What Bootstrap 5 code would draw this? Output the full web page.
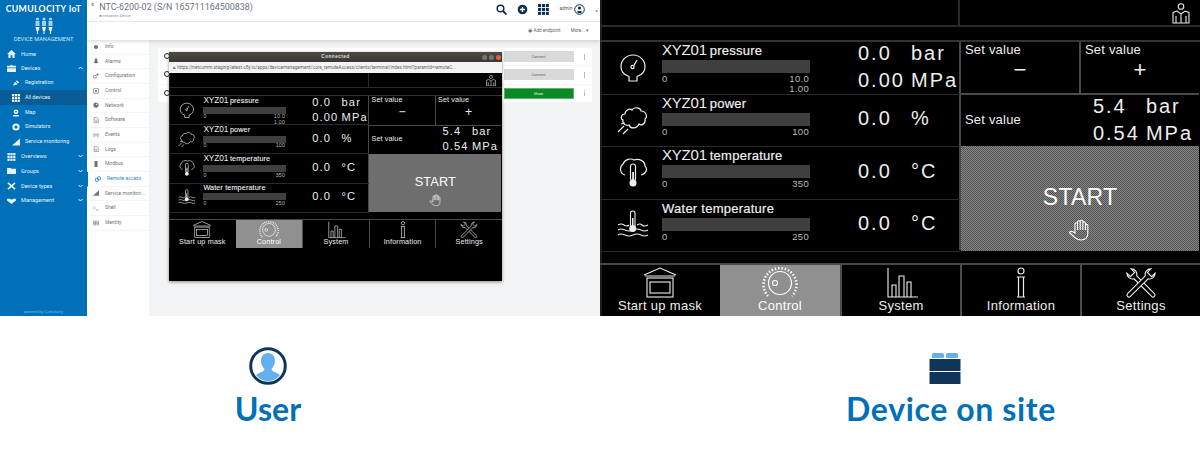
<!doctype html>
<html lang="en"><head><meta charset="utf-8"><title>Remote access</title>
<link href="https://cdn.jsdelivr.net/npm/bootstrap@5.3.0/dist/css/bootstrap.min.css" rel="stylesheet">
<style>
html,body{margin:0;background:#fff;overflow:hidden}
body{width:1200px;height:450px;font-family:"Roboto",sans-serif}
.shots{height:316px}
.cloud-pane,.hmi-pane{width:600px;height:316px;overflow:hidden}
.cloud-pane{position:relative;background:#f2f3f5}
.hmi-pane{background:#000}

.side-a{width:87px;background:#0071b9;color:#e8f3fb;flex:none}
.brand-t{font:700 8.7px/1 "Lato",sans-serif;letter-spacing:.35px;color:#fff;text-align:center;padding-top:5px;white-space:nowrap}
.brand-ic{display:block;margin:3px auto 0;width:20px;height:17px}
.brand-s{font-size:5.7px;line-height:1;text-align:center;margin-top:3px;margin-bottom:4px;color:#cfe4f3;white-space:nowrap}
.nav-i{height:14.7px;font-size:5.6px;display:flex;align-items:center;gap:5px;padding-left:7px;position:relative;white-space:nowrap}
.nav-i svg{width:9px;height:8px;flex:none}
.nav-i.sub{padding-left:12px;gap:5px;font-size:5.3px}
.nav-i.sub svg{width:8px}
.nav-i.on{background:#0a5c96}
.nav-i .chev{position:absolute;right:4px;top:5px;width:5px;height:4px}
.side-f{font-size:3.8px;text-align:center;color:#7fb9de;margin-top:auto;padding-bottom:1px}

.main-a{flex:1;min-width:0}
.head-a{height:22px;background:#fff;border-bottom:1px solid #e8e9eb;padding-left:4px;color:#6b7480}
.back-m{font-size:7px;margin-right:5px;color:#555}
.title-a{font-size:8.95px;line-height:1;padding-top:3px;white-space:nowrap}
.title-s{font-size:3.8px;line-height:1;margin-top:2px;color:#8a929b}
.tool-wrap{gap:10px;padding-right:2px}
.tool-ic{width:11px;height:11px;color:#0c2f52;flex:none}
.tool-user{margin-left:-8px}
.back-s{font-size:6px;margin:0}
.admin-t{font-size:4.6px;color:#555}
.bar-a{height:18px;background:#fff;box-shadow:0 2px 3px rgba(0,0,0,.12);position:relative;font-size:4.6px;color:#666;padding-right:11px;gap:10px}
.body-a{flex:1;min-height:0}
.tabs-a{width:62px;background:#fff;flex:none}
.tab-i{height:14.67px;border-bottom:1px solid #f4f5f6;font-size:5px;color:#6c747c;display:flex;align-items:center;gap:6px;padding-left:6px;white-space:nowrap}
.tab-i svg{width:6px;height:6px;flex:none}
.tab-i.on{border-left:1.5px solid #0071b9;color:#2f88c6;padding-left:7px}
.list-a{margin:8px 0 0 9px;width:434px;height:55px;background:#fff;align-self:flex-start}
.list-r{height:18.3px;padding-right:4px;border-bottom:1px solid #f4f5f6}
.btn-a{width:70px;height:11px;padding:0;border:0;border-radius:0;background:#d9d9d9;color:#666;font-size:3.8px;line-height:11px;text-align:center}
.btn-a.go{background:#0a8a25;color:#e8ffe8;border:1px solid #5fb26f;line-height:9px}
.dots-a{width:1.5px;height:6px;margin:0 3px 0 10px;background:repeating-linear-gradient(#bbb 0 1.5px,#fff 1.5px 2.2px)}
.lead-dot{position:absolute;left:164px;width:6px;height:6px;border-radius:50%;border:1.5px solid #222;background:#fff}
.ld-1{top:53px}.ld-2{top:71px}.ld-3{top:90px}

.win-a{position:absolute;left:169px;top:52px;width:333px;height:229px;background:#000;box-shadow:0 1px 3px rgba(60,50,30,.55)}
.win-t{height:10px;background:linear-gradient(#4c4a45,#3a3833);color:#ddd;font:700 4.8px/10px "Liberation Sans",sans-serif;text-align:center;letter-spacing:.4px;position:relative}
.win-b{position:absolute;right:1px;top:2.5px;display:flex;gap:2px}
.win-b i{width:5px;height:5px;border-radius:50%;background:#77756f;display:block}
.win-b i:last-child{background:#e0623a}
.win-u{height:11px;background:#f3f3f3;color:#666;font:4.7px/11px "Roboto",sans-serif;padding-left:4px;white-space:nowrap;overflow:hidden}
.win-a .hmi-a{zoom:.555}
.win-a .hm-start{background:#6e6e6e}

.hmi-a{width:600px;height:316px;background:#000;color:#eee;font-family:"Liberation Sans",sans-serif;position:relative;overflow:hidden;box-shadow:inset 2px 0 #1e1e1e}
.hm-top{height:27px;border-bottom:2px solid #2a2a2a}
.hm-top-l{width:360px;border-right:2px solid #2a2a2a}
.hm-user{width:18px;height:21px;margin:3px 10px 0 auto;display:block;color:#e8e8e8}
.hm-sp{height:13px}
.hm-main{height:210px;border-top:2px solid #333}
.hm-left{width:360px;flex:none}
.hm-row{height:52.5px;border-bottom:1px solid #2a2a2a;display:flex;position:relative}
.hm-ic{width:60px;flex:none;display:flex;justify-content:center;align-items:center;padding-left:5px}
.hm-ic svg{width:32px;height:30px;color:#eee}
.hm-mid{width:150px;flex:none;padding-left:2px}
.hm-l{font-size:14px;line-height:16px;white-space:nowrap;word-spacing:-1px}
.hm-l b{font-weight:400;font-size:15px;letter-spacing:-.2px}
.hm-l span{font-size:13px;letter-spacing:.25px;-webkit-text-stroke:.2px #eee;word-spacing:0}
.hm-bar{height:13px;background:#3f3f3f;margin-top:1px;width:148px}
.hm-sc{display:flex;justify-content:space-between;font-size:9.5px;line-height:10px;margin-top:1px;width:147px;color:#bbb;letter-spacing:.3px}
.hm-sc2{font-size:9.5px;line-height:9px;text-align:right;width:147px;color:#bbb;letter-spacing:.3px}
.hm-val{margin-left:48px;font-size:20px;letter-spacing:2px;flex:none;margin-top:-3px}
.hm-v{display:flex;height:27px;align-items:center;white-space:nowrap}
.hm-v>span:first-child{width:53px}
.hm-val.one{display:flex;align-items:center;margin-top:-4px}
.hm-right{width:240px;flex:none;border-left:2px solid #4a4a4a;margin-left:-1px}
.hm-set{height:53px;border-bottom:2px solid #4a4a4a}
.hm-cell{flex:1;position:relative;font-size:13px;letter-spacing:.2px;padding:0 0 0 4px;line-height:16px}
.hm-cell+.hm-cell{border-left:2px solid #4a4a4a}
.hm-sym{text-align:center;font-size:22px;line-height:22px;margin-top:1px;padding-right:4px}
.hm-set2{height:51px;border-bottom:0}
.hm-set2 .hm-val{margin-right:6px;margin-top:-2px}
.hm-set2 .hm-cell{margin-top:-2px}
.hm-start{height:105px;background:repeating-conic-gradient(#4f4f4f 0 25%,#8a8a8a 0 50%) 0 0/2px 2px;text-align:center;font-size:23px;letter-spacing:.2px;line-height:26px;padding-top:38px;color:#fff}
.hm-start svg{display:block;width:24px;height:24px;margin:7px auto 0}
.hm-tabs{position:absolute;left:0;right:0;top:263px;height:53px;border-top:2px solid #4a4a4a}
.hm-tab{width:120px;flex:none;text-align:center;font-size:13px;letter-spacing:.3px;line-height:15px;position:relative;color:#eee}
.hm-tab+.hm-tab{border-left:2px solid #4a4a4a}
.hm-tab svg{display:block;width:36px;height:32px;margin:2px auto -1px}
.hm-tab.act{background:#909090;border:0;color:#fff}

.lower{height:134px}
.cap-a{font:700 32px/1 "Lato",sans-serif;color:#0071b9;letter-spacing:.1px}
.pic-u{width:38px;height:38px;margin-top:31px;display:block}
.pic-d{width:32px;height:32px;margin-top:37px;display:block;margin-right:12px}
.lower .col-6{height:134px}
.col-user{padding-right:64px}
.col-dev{padding-left:102px}
.cap-u{margin-top:8px}
.cap-d{margin-top:8px;letter-spacing:.62px}
</style></head><body>

<svg width="0" height="0" class="position-absolute" aria-hidden="true">
<defs>
<symbol id="g-gauge" viewBox="0 0 32 30"><g fill="none" stroke="currentColor" stroke-width="1.2"><path d="M12 23.5C7 22 4 18 4 13.500A12 11.500 0 0 1 28 13.500C28 18 25 22 20 23.500V28H12Z"/><circle cx="15.500" cy="14" r="1.600"/><path d="M16.500 13L20 7"/></g></symbol>
<symbol id="g-steam" viewBox="0 0 32 30"><g fill="none" stroke="currentColor" stroke-width="1.200"><path d="M8 9C8 5 13 3 15 5C17 1 24 3 24 6C29 6 31 12 28 14C29 19 24 21 22 19C20 24 13 24 12 20C9 21 5 19 6 15C3 14 4 9 8 9Z"/><path d="M1 27L7 21M6 29L11 24M4 19L8 18"/></g></symbol>
<symbol id="g-therm" viewBox="0 0 32 30"><g fill="none" stroke="currentColor" stroke-width="1.200"><path d="M8 17C3 16 2 9 6 6C8 1 14 0 17 2C22 0 28 3 28 8C31 11 29 16 24 17"/></g><rect x="13.500" y="6" width="5" height="17" rx="2.500" fill="#000" stroke="currentColor" stroke-width="1.200"/><rect x="15.200" y="14" width="1.800" height="9" fill="currentColor"/><circle cx="16" cy="25" r="3.500" fill="currentColor"/></symbol>
<symbol id="g-water" viewBox="0 0 32 30"><g fill="none" stroke="currentColor" stroke-width="1.100"><rect x="13.500" y="1" width="4.500" height="17" rx="2.200"/><path d="M1 15Q4 13 7 15T12 15M20 15Q23 13 25 15T31 15M1 20Q4 18 8 20T16 20T24 20T31 20M1 25Q4 23 8 25T16 25T24 25T31 25"/></g><circle cx="15.700" cy="18.500" r="3.500" fill="currentColor"/><rect x="15" y="8" width="1.500" height="10" fill="currentColor"/></symbol>
<symbol id="g-user" viewBox="0 0 18 21"><g fill="none" stroke="currentColor" stroke-width="1.100"><circle cx="9" cy="3.500" r="2.800"/><path d="M1 20V9.500L5 8L9 11L13 8L17 9.500V20H1ZM9 11V20M4 13V20M14 13V20"/></g></symbol>
<symbol id="g-hand" viewBox="0 0 24 24"><g fill="none" stroke="currentColor" stroke-width="1.100"><path d="M7 16V7a1.300 1.300 0 0 1 2.600 0V5a1.300 1.300 0 0 1 2.600 0V4.500a1.300 1.300 0 0 1 2.600 0V6a1.300 1.300 0 0 1 2.600 0V8a1.300 1.300 0 0 1 2.400 0V16C20 21 17 23 13 23C9 23 7 21 1.500 15.500C2 13.500 4 14 7 16Z"/><path d="M9.600 7V13M12.200 5V13M14.800 6V13M17.400 8V13"/></g></symbol>
<symbol id="g-mask" viewBox="0 0 36 32"><g fill="none" stroke="currentColor" stroke-width="1.100"><path d="M2 8L18 1L34 8M3 9H33"/><rect x="5" y="11" width="26" height="19"/><rect x="8" y="15" width="20" height="11"/></g></symbol>
<symbol id="g-ctrl" viewBox="0 0 36 32"><g fill="none" stroke="currentColor" stroke-width="1.200"><circle cx="18" cy="16" r="11.500"/><circle cx="13" cy="16" r="2.500"/><path stroke-width="2.600" stroke-dasharray="1.400 1.900" d="M6 29A16.500 16.500 0 1 1 30 29"/></g></symbol>
<symbol id="g-sys" viewBox="0 0 36 32"><g fill="none" stroke="currentColor" stroke-width="1.100"><path d="M5 1V30H35"/><path d="M9 30V18H13V30M16 30V9H21V30M24 30V15H28V30"/></g></symbol>
<symbol id="g-info" viewBox="0 0 36 32"><g fill="none" stroke="currentColor" stroke-width="1.200"><circle cx="18" cy="4" r="3"/><path d="M14 10H22M14 30H22M15.500 10V30M20.500 10V30"/></g></symbol>
<symbol id="g-tools" viewBox="0 0 36 32"><g fill="#000" stroke="currentColor" stroke-width="1.100"><path transform="rotate(-45 18 16)" d="M16 8V33a2 2 0 0 0 4 0V8C23.500 6 23.500 1.500 21 -1V4H15V-1C12.500 1.500 12.500 6 16 8Z"/><path transform="rotate(45 18 16)" d="M16 8V33a2 2 0 0 0 4 0V8C23.500 6 23.500 1.500 21 -1V4H15V-1C12.500 1.500 12.500 6 16 8Z"/></g></symbol>
<symbol id="s-home" viewBox="0 0 10 9"><path fill="currentColor" d="M5 0L0 4.500H1.500V9H4V6H6V9H8.500V4.500H10Z"/></symbol>
<symbol id="s-box" viewBox="0 0 10 9"><path fill="currentColor" d="M0 2H4V1H6V2H10V4H0ZM0 4.800H10V9H0Z"/></symbol>
<symbol id="s-grid" viewBox="0 0 9 9"><g fill="currentColor"><rect width="2.500" height="2.500"/><rect x="3.200" width="2.500" height="2.500"/><rect x="6.400" width="2.500" height="2.500"/><rect y="3.200" width="2.500" height="2.500"/><rect x="3.200" y="3.200" width="2.500" height="2.500"/><rect x="6.400" y="3.200" width="2.500" height="2.500"/><rect y="6.400" width="2.500" height="2.500"/><rect x="3.200" y="6.400" width="2.500" height="2.500"/><rect x="6.400" y="6.400" width="2.500" height="2.500"/></g></symbol>
<symbol id="s-sat" viewBox="0 0 10 9"><path fill="currentColor" d="M1 8L4 3L7 6ZM6 1L9 4L7.500 5L5 2.500Z"/></symbol>
<symbol id="s-pin" viewBox="0 0 10 9"><path fill="currentColor" fill-rule="evenodd" d="M5 0A3 3 0 0 1 5 6A3 3 0 0 1 5 0ZM5 2A1 1 0 1 0 5 4A1 1 0 1 0 5 2ZM1.500 7H8.500V9H1.500Z"/></symbol>
<symbol id="s-ring" viewBox="0 0 10 9"><path fill="currentColor" fill-rule="evenodd" d="M5 0A4.500 4.500 0 1 1 5 9A4.500 4.500 0 1 1 5 0ZM5 2.500A2 2 0 1 0 5 6.500A2 2 0 1 0 5 2.500Z"/></symbol>
<symbol id="s-sig" viewBox="0 0 10 9"><path fill="currentColor" d="M0 9L10 0V9Z"/></symbol>
<symbol id="s-folder" viewBox="0 0 10 9"><path fill="currentColor" d="M0 1H4L5 2H10V8H0Z"/></symbol>
<symbol id="s-types" viewBox="0 0 10 9"><path fill="none" stroke="currentColor" stroke-width="1.800" d="M1 8L9 1M1 1L9 8"/></symbol>
<symbol id="s-shake" viewBox="0 0 10 9"><path fill="currentColor" d="M0 2H3L5 3L7 2H10V4L5 8L0 4Z"/></symbol>
<symbol id="s-chev-d" viewBox="0 0 5 4"><path fill="none" stroke="currentColor" d="M.5 1L2.500 3L4.500 1"/></symbol>
<symbol id="s-chev-u" viewBox="0 0 5 4"><path fill="none" stroke="currentColor" d="M.5 3L2.500 1L4.500 3"/></symbol>
<symbol id="t-gear" viewBox="0 0 8 8"><circle cx="4" cy="4" r="2.800" fill="currentColor"/></symbol>
<symbol id="t-bell" viewBox="0 0 8 8"><path fill="currentColor" d="M4 0C6 1 6 3 6 5L7 6.500H1L2 5C2 3 2 1 4 0ZM3 7H5L4 8Z"/></symbol>
<symbol id="t-cfg" viewBox="0 0 8 8"><circle cx="2.500" cy="5" r="2" fill="none" stroke="currentColor"/><circle cx="6" cy="2" r="1.500" fill="currentColor"/></symbol>
<symbol id="t-ctl" viewBox="0 0 8 8"><rect x=".5" y="1" width="7" height="6" rx="1" fill="none" stroke="currentColor"/><circle cx="4" cy="4" r="1.300" fill="currentColor"/></symbol>
<symbol id="t-net" viewBox="0 0 8 8"><circle cx="4" cy="4" r="3.500" fill="currentColor"/><circle cx="5" cy="3" r="1" fill="#fff"/></symbol>
<symbol id="t-doc" viewBox="0 0 8 8"><path fill="none" stroke="currentColor" stroke-width=".8" d="M1.500 .5H5L7 2.500V7.500H1.500ZM3 4H5.500M3 5.700H5.500"/></symbol>
<symbol id="t-ev" viewBox="0 0 8 8"><path fill="none" stroke="currentColor" d="M2 1.500Q0 4 2 6.500M6 1.500Q8 4 6 6.500"/><circle cx="4" cy="4" r="1" fill="currentColor"/></symbol>
<symbol id="t-mod" viewBox="0 0 8 8"><rect x="2" y="0" width="4" height="8" fill="currentColor"/></symbol>
<symbol id="t-link" viewBox="0 0 8 8"><g fill="none" stroke="currentColor" stroke-width="1.200"><rect x=".6" y="3" width="4" height="4" rx="1"/><rect x="3.400" y="1" width="4" height="4" rx="1"/></g></symbol>
<symbol id="t-sh" viewBox="0 0 8 8"><path fill="none" stroke="currentColor" stroke-width=".8" d="M1 2L3 4L1 6M4 6.500H7.500"/></symbol>
<symbol id="t-id" viewBox="0 0 8 8"><path fill="none" stroke="currentColor" stroke-width=".7" d="M.5 1.500H7.500V6.500H.5ZM.5 3.200H7.500M.5 4.800H7.500M3 1.500V6.500"/></symbol>
</defs></svg>

<div class="shots d-flex">
<section class="cloud-pane d-flex">
  <nav class="side-a d-flex flex-column">
    <div class="brand-t">CUMULOCITY IoT</div>
    <svg class="brand-ic" viewBox="0 0 20 17"><g fill="#fff"><circle cx="3.500" cy="2" r="1.600" fill="#9fd0ee"/><rect x="1.500" y="4" width="4" height="5" fill="#9fd0ee"/><path d="M1.500 10H5.500L4.500 14H4V17H3V14H2.500Z"/><circle cx="10" cy="2" r="1.600" fill="#9fd0ee"/><rect x="8" y="4" width="4" height="5" fill="#9fd0ee"/><path d="M8 10H12L11 14H10.500V17H9.500V14H9Z"/><circle cx="16.500" cy="2" r="1.600" fill="#9fd0ee"/><rect x="14.500" y="4" width="4" height="5" fill="#9fd0ee"/><path d="M14.500 10H18.500L17.500 14H17V17H16V14H15.500Z"/></g></svg>
    <div class="brand-s">DEVICE MANAGEMENT</div>
    <div class="nav-i"><svg><use href="#s-home"/></svg>Home</div>
    <div class="nav-i"><svg><use href="#s-box"/></svg>Devices<svg class="chev"><use href="#s-chev-u"/></svg></div>
    <div class="nav-i sub"><svg><use href="#s-sat"/></svg>Registration</div>
    <div class="nav-i sub on"><svg><use href="#s-grid"/></svg>All devices</div>
    <div class="nav-i sub"><svg><use href="#s-pin"/></svg>Map</div>
    <div class="nav-i sub"><svg><use href="#s-ring"/></svg>Simulators</div>
    <div class="nav-i sub"><svg><use href="#s-sig"/></svg>Service monitoring</div>
    <div class="nav-i"><svg><use href="#s-grid"/></svg>Overviews<svg class="chev"><use href="#s-chev-d"/></svg></div>
    <div class="nav-i"><svg><use href="#s-folder"/></svg>Groups<svg class="chev"><use href="#s-chev-d"/></svg></div>
    <div class="nav-i"><svg><use href="#s-types"/></svg>Device types<svg class="chev"><use href="#s-chev-d"/></svg></div>
    <div class="nav-i"><svg><use href="#s-shake"/></svg>Management<svg class="chev"><use href="#s-chev-d"/></svg></div>
    <div class="side-f">powered by Cumulocity</div>
  </nav>
  <div class="main-a d-flex flex-column">
    <header class="head-a d-flex align-items-start">
      <span class="back-m">«</span>
      <div class="flex-grow-1"><div class="title-a">NTC-6200-02 (S/N 165711164500838)</div><div class="title-s">■ netcomm Device</div></div>
      <div class="d-flex align-items-center tool-wrap pt-1">
        <svg class="tool-ic" viewBox="0 0 11 11"><circle cx="4.500" cy="4.500" r="3.300" fill="none" stroke="currentColor" stroke-width="1.500"/><path d="M7 7L10.500 10.500" stroke="currentColor" stroke-width="1.800"/></svg>
        <svg class="tool-ic" viewBox="0 0 11 11"><circle cx="5.500" cy="5.500" r="4.800" fill="currentColor"/><path d="M5.500 3V8M3 5.500H8" stroke="#fff" stroke-width="1.300"/></svg>
        <svg class="tool-ic"><use href="#s-grid"/></svg>
        <span class="admin-t">admin</span>
        <svg class="tool-ic tool-user" viewBox="0 0 11 11"><circle cx="5.500" cy="5.500" r="4.800" fill="none" stroke="currentColor"/><circle cx="5.500" cy="4" r="1.600" fill="currentColor"/><path d="M3.500 9V7H7.500V9Z" fill="currentColor"/></svg>
        <span class="back-m back-s">«</span>
      </div>
    </header>
    <div class="bar-a d-flex justify-content-end align-items-center"><span>◉ Add endpoint</span><span>More... ▾</span></div>
    <div class="body-a d-flex">
      <div class="tabs-a">
        <div class="tab-i"><svg><use href="#t-gear"/></svg>Info</div>
        <div class="tab-i"><svg><use href="#t-bell"/></svg>Alarms</div>
        <div class="tab-i"><svg><use href="#t-cfg"/></svg>Configuration</div>
        <div class="tab-i"><svg><use href="#t-ctl"/></svg>Control</div>
        <div class="tab-i"><svg><use href="#t-net"/></svg>Network</div>
        <div class="tab-i"><svg><use href="#t-doc"/></svg>Software</div>
        <div class="tab-i"><svg><use href="#t-ev"/></svg>Events</div>
        <div class="tab-i"><svg><use href="#t-doc"/></svg>Logs</div>
        <div class="tab-i"><svg><use href="#t-mod"/></svg>Modbus</div>
        <div class="tab-i on"><svg><use href="#t-link"/></svg>Remote access</div>
        <div class="tab-i"><svg><use href="#s-sig"/></svg>Service monitori...</div>
        <div class="tab-i"><svg><use href="#t-sh"/></svg>Shell</div>
        <div class="tab-i"><svg><use href="#t-id"/></svg>Identity</div>
      </div>
      <div class="list-a">
        <div class="list-r d-flex justify-content-end align-items-center"><button class="btn btn-a">Connect</button><span class="dots-a"></span></div>
        <div class="list-r d-flex justify-content-end align-items-center"><button class="btn btn-a">Connect</button><span class="dots-a"></span></div>
        <div class="list-r d-flex justify-content-end align-items-center"><button class="btn btn-a go">Show</button><span class="dots-a"></span></div>
      </div>
    </div>
  </div>
  <span class="lead-dot ld-1"></span><span class="lead-dot ld-2"></span><span class="lead-dot ld-3"></span>

  <div class="win-a">
    <div class="win-t">Connected<span class="win-b"><i></i><i></i><i></i></span></div>
    <div class="win-u">🔒︎ https://netcomm.staging-latest.c8y.io/apps/devicemanagement/core_remoteAccess/clients/terminal/index.html?paramId=remoteC...</div>
    <div class="hmi-a">
      <div class="hm-top d-flex"><div class="hm-top-l"></div><div class="flex-grow-1"><svg class="hm-user"><use href="#g-user"/></svg></div></div>
      <div class="hm-sp"></div>
      <div class="hm-main d-flex">
        <div class="hm-left">
          <div class="hm-row"><div class="hm-ic"><svg><use href="#g-gauge"/></svg></div><div class="hm-mid"><div class="hm-l"><b>XYZ01</b> <span>pressure</span></div><div class="hm-bar"></div><div class="hm-sc"><span>0</span><span>10.0</span></div><div class="hm-sc2">1.00</div></div><div class="hm-val"><div class="hm-v"><span>0.0</span><span>bar</span></div><div class="hm-v"><span>0.00</span><span>MPa</span></div></div></div>
          <div class="hm-row"><div class="hm-ic"><svg><use href="#g-steam"/></svg></div><div class="hm-mid"><div class="hm-l"><b>XYZ01</b> <span>power</span></div><div class="hm-bar"></div><div class="hm-sc"><span>0</span><span>100</span></div></div><div class="hm-val one"><div class="hm-v"><span>0.0</span><span>%</span></div></div></div>
          <div class="hm-row"><div class="hm-ic"><svg><use href="#g-therm"/></svg></div><div class="hm-mid"><div class="hm-l"><b>XYZ01</b> <span>temperature</span></div><div class="hm-bar"></div><div class="hm-sc"><span>0</span><span>350</span></div></div><div class="hm-val one"><div class="hm-v"><span>0.0</span><span>°C</span></div></div></div>
          <div class="hm-row"><div class="hm-ic"><svg><use href="#g-water"/></svg></div><div class="hm-mid"><div class="hm-l"><span>Water temperature</span></div><div class="hm-bar"></div><div class="hm-sc"><span>0</span><span>250</span></div></div><div class="hm-val one"><div class="hm-v"><span>0.0</span><span>°C</span></div></div></div>
        </div>
        <div class="hm-right">
          <div class="hm-set d-flex"><div class="hm-cell">Set value<div class="hm-sym">−</div></div><div class="hm-cell">Set value<div class="hm-sym">+</div></div></div>
          <div class="hm-set hm-set2 d-flex align-items-center"><div class="hm-cell flex-grow-0 text-nowrap">Set value</div><div class="hm-val ms-auto"><div class="hm-v"><span>5.4</span><span>bar</span></div><div class="hm-v"><span>0.54</span><span>MPa</span></div></div></div>
          <div class="hm-start">START<svg><use href="#g-hand"/></svg></div>
        </div>
      </div>
      <div class="hm-tabs d-flex">
        <div class="hm-tab"><svg><use href="#g-mask"/></svg>Start up mask</div>
        <div class="hm-tab act"><svg><use href="#g-ctrl"/></svg>Control</div>
        <div class="hm-tab"><svg><use href="#g-sys"/></svg>System</div>
        <div class="hm-tab"><svg><use href="#g-info"/></svg>Information</div>
        <div class="hm-tab"><svg><use href="#g-tools"/></svg>Settings</div>
      </div>
    </div>
  </div>
</section>

<section class="hmi-pane">
  <div class="hmi-a">
    <div class="hm-top d-flex"><div class="hm-top-l"></div><div class="flex-grow-1"><svg class="hm-user"><use href="#g-user"/></svg></div></div>
    <div class="hm-sp"></div>
    <div class="hm-main d-flex">
      <div class="hm-left">
        <div class="hm-row"><div class="hm-ic"><svg><use href="#g-gauge"/></svg></div><div class="hm-mid"><div class="hm-l"><b>XYZ01</b> <span>pressure</span></div><div class="hm-bar"></div><div class="hm-sc"><span>0</span><span>10.0</span></div><div class="hm-sc2">1.00</div></div><div class="hm-val"><div class="hm-v"><span>0.0</span><span>bar</span></div><div class="hm-v"><span>0.00</span><span>MPa</span></div></div></div>
        <div class="hm-row"><div class="hm-ic"><svg><use href="#g-steam"/></svg></div><div class="hm-mid"><div class="hm-l"><b>XYZ01</b> <span>power</span></div><div class="hm-bar"></div><div class="hm-sc"><span>0</span><span>100</span></div></div><div class="hm-val one"><div class="hm-v"><span>0.0</span><span>%</span></div></div></div>
        <div class="hm-row"><div class="hm-ic"><svg><use href="#g-therm"/></svg></div><div class="hm-mid"><div class="hm-l"><b>XYZ01</b> <span>temperature</span></div><div class="hm-bar"></div><div class="hm-sc"><span>0</span><span>350</span></div></div><div class="hm-val one"><div class="hm-v"><span>0.0</span><span>°C</span></div></div></div>
        <div class="hm-row"><div class="hm-ic"><svg><use href="#g-water"/></svg></div><div class="hm-mid"><div class="hm-l"><span>Water temperature</span></div><div class="hm-bar"></div><div class="hm-sc"><span>0</span><span>250</span></div></div><div class="hm-val one"><div class="hm-v"><span>0.0</span><span>°C</span></div></div></div>
      </div>
      <div class="hm-right">
        <div class="hm-set d-flex"><div class="hm-cell">Set value<div class="hm-sym">−</div></div><div class="hm-cell">Set value<div class="hm-sym">+</div></div></div>
        <div class="hm-set hm-set2 d-flex align-items-center"><div class="hm-cell flex-grow-0 text-nowrap">Set value</div><div class="hm-val ms-auto"><div class="hm-v"><span>5.4</span><span>bar</span></div><div class="hm-v"><span>0.54</span><span>MPa</span></div></div></div>
        <div class="hm-start">START<svg><use href="#g-hand"/></svg></div>
      </div>
    </div>
    <div class="hm-tabs d-flex">
      <div class="hm-tab"><svg><use href="#g-mask"/></svg>Start up mask</div>
      <div class="hm-tab act"><svg><use href="#g-ctrl"/></svg>Control</div>
      <div class="hm-tab"><svg><use href="#g-sys"/></svg>System</div>
      <div class="hm-tab"><svg><use href="#g-info"/></svg>Information</div>
      <div class="hm-tab"><svg><use href="#g-tools"/></svg>Settings</div>
    </div>
  </div>
</section>
</div>

<div class="row g-0 lower">
  <div class="col-6 col-user d-flex flex-column align-items-center">
    <svg class="pic-u" viewBox="0 0 38 38"><circle cx="19" cy="19" r="17.300" fill="#fff" stroke="#0f3658" stroke-width="3"/><path fill="#62b0ef" d="M19 6C24 6 26 10 26 14C26 18 24 20 22.500 22C23 25 27 25 31 28A15 15 0 0 1 7 28C11 25 15 25 15.500 22C14 20 12 18 12 14C12 10 14 6 19 6Z"/></svg>
    <div class="cap-a cap-u">User</div>
  </div>
  <div class="col-6 col-dev d-flex flex-column align-items-center">
    <svg class="pic-d" viewBox="0 0 32 32"><rect x="3" y="0" width="12" height="5" rx="1.500" fill="#62b0ef"/><rect x="17" y="0" width="12" height="5" rx="1.500" fill="#62b0ef"/><rect x="0.500" y="6" width="31" height="12" fill="#0f3658"/><rect x="0.500" y="19" width="31" height="12" fill="#0f3658"/></svg>
    <div class="cap-a cap-d">Device on site</div>
  </div>
</div>
<script src="https://cdn.jsdelivr.net/npm/bootstrap@5.3.0/dist/js/bootstrap.bundle.min.js"></script>
</body></html>
